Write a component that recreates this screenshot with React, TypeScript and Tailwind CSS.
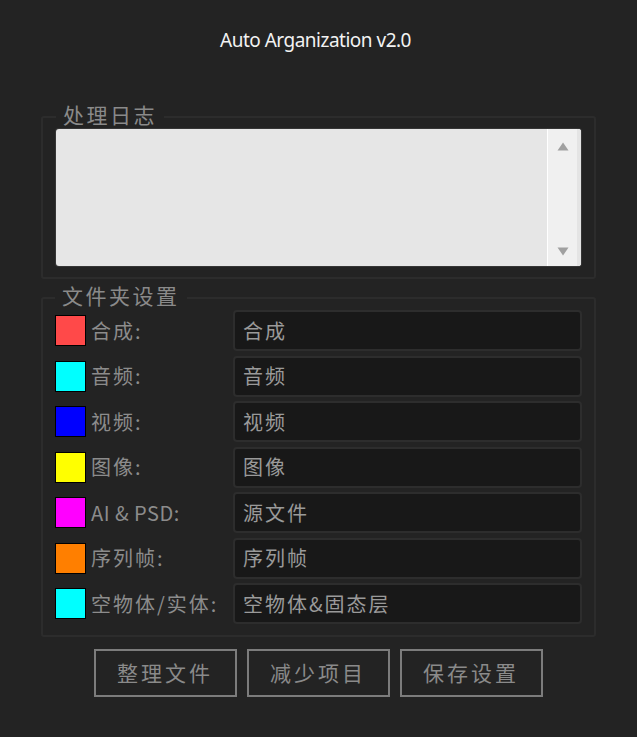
import React from 'react';

// Folder rows: colour swatch, label, folder name
const folders = [
  { color: 'bg-[#ff4949]', label: '合成:', name: '合成' },
  { color: 'bg-[#00ffff]', label: '音频:', name: '音频' },
  { color: 'bg-[#0000ff]', label: '视频:', name: '视频' },
  { color: 'bg-[#ffff00]', label: '图像:', name: '图像' },
  { color: 'bg-[#ff00ff]', label: 'AI & PSD:', name: '源文件', latin: true },
  { color: 'bg-[#ff7f00]', label: '序列帧:', name: '序列帧' },
  { color: 'bg-[#00ffff]', label: '空物体/实体:', name: '空物体&固态层' },
];

const cjk = "font-['Noto_Sans_CJK_SC','Noto_Sans',sans-serif]";

const Arrow: React.FC<{ down?: boolean }> = ({ down }) => (
  <svg width="12" height="9" viewBox="0 0 12 9" className="block">
    {down ? (
      <path d="M0.5 0.5 H11.5 L6 8.5 Z" fill="#a0a0a0" />
    ) : (
      <path d="M6 0.5 L11.5 8.5 H0.5 Z" fill="#a0a0a0" />
    )}
  </svg>
);

export default function App() {
  return (
    <div className={`w-[637px] h-[737px] bg-[#232323] ${cjk} overflow-hidden`}>
      <div className="pt-[27px] pr-[6px] text-center text-[19px] leading-[26px] tracking-[-0.5px] text-[#f2f2f2] font-['Noto_Sans',sans-serif]">
        Auto Arganization v2.0
      </div>

      {/* log panel */}
      <fieldset className="mt-[52px] ml-[41px] w-[555px] border-2 border-[#2c2c2c] rounded-[3px] px-[13px] pb-[11px]">
        <legend className="px-[7px] pb-[6px] text-[21px] leading-[18px] tracking-[2.5px] text-[#8a8a8a]">
          处理日志
        </legend>
        <div className="flex h-[137px] bg-[#e6e6e6] rounded-[3px] ring-1 ring-[#363636] overflow-hidden">
          <div className="flex-1" />
          <div className="flex w-[34px] border-l border-white bg-[#f0f0f0]">
            <div className="flex-1 flex flex-col items-center justify-between pt-[13px] pb-[10px]">
              <Arrow />
              <Arrow down />
            </div>
            <div className="w-[4px] bg-[#e4e4e4]" />
          </div>
        </div>
      </fieldset>

      {/* folder settings */}
      <fieldset className="mt-[7px] ml-[41px] w-[555px] border-2 border-[#2c2c2c] rounded-[3px] px-[12px] pb-[11px]">
        <legend className="px-[7px] pb-[6px] text-[21px] leading-[18px] tracking-[2.5px] text-[#8a8a8a]">
          文件夹设置
        </legend>
        <div className="flex flex-col gap-[4.5px]">
          {folders.map((f) => (
            <div key={f.label} className="flex items-center h-[41px]">
              <div className={`w-[31px] h-[31px] border border-black ${f.color}`} />
              <div
                className={`w-[147px] pl-[5px] text-[20px] text-[#8c8c8c] whitespace-nowrap ${f.latin ? 'tracking-[0.5px]' : 'tracking-[2px]'}`}
              >
                {f.label}
              </div>
              <div className="flex-1 h-[41px] flex items-center pl-[8px] bg-[#181818] border-2 border-[#2d2d2d] rounded-[4px] text-[20px] tracking-[2px] text-[#9a9a9a] whitespace-nowrap">
                {f.name}
              </div>
            </div>
          ))}
        </div>
      </fieldset>

      <div className="mt-[12px] flex justify-center gap-[10px] pr-[1px]">
        {['整理文件', '减少项目', '保存设置'].map((t) => (
          <button
            key={t}
            type="button"
            className="w-[143px] h-[48px] border-2 border-[#7c7c7c] text-[21px] tracking-[3px] text-[#8a8a8a] flex items-center justify-center"
          >
            {t}
          </button>
        ))}
      </div>
    </div>
  );
}
